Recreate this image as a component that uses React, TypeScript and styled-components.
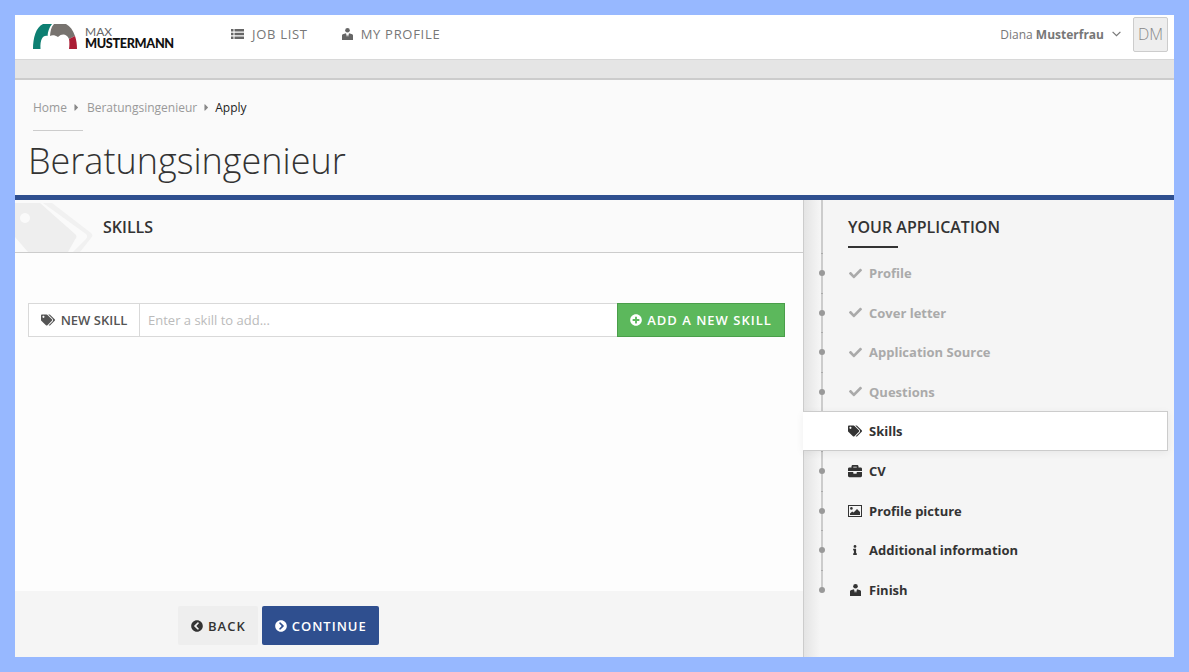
import styled, { createGlobalStyle } from 'styled-components';
import type { ReactNode } from 'react';
import {
  FaBriefcase,
  FaCaretRight,
  FaCheck,
  FaChevronCircleLeft,
  FaChevronCircleRight,
  FaInfo,
  FaPlusCircle,
  FaTags,
} from 'react-icons/fa';

const GlobalStyle = createGlobalStyle`
  * { box-sizing: border-box; }
  html, body { margin: 0; height: 100%; }
  body {
    background: #97b8ff;
    font-family: 'Open Sans', 'Liberation Sans', sans-serif;
    color: #333;
  }
`;

function PictureIcon() {
  return (
    <svg width="14" height="12" viewBox="0 0 14 12">
      <path fill="currentColor" fillRule="evenodd" d="M0 0h14v12H0zM1 1v10h12V1z" />
      <circle cx="3.4" cy="3.4" r="1.3" fill="currentColor" />
      <path fill="currentColor" d="M2 10V8.4l2.2-2 1.4 1.2L9 4l3 3v3z" />
    </svg>
  );
}

function ListIcon() {
  return (
    <svg width="13" height="10" viewBox="0 0 13 10">
      <path
        fill="currentColor"
        d="M0 0h2.5v2.4H0zM3.5 0H13v2.4H3.5zM0 3.8h2.5v2.4H0zM3.5 3.8H13v2.4H3.5zM0 7.6h2.5V10H0zM3.5 7.6H13V10H3.5z"
      />
    </svg>
  );
}

function PersonIcon() {
  return (
    <svg width="11" height="12" viewBox="0 0 11 12">
      <circle cx="5.5" cy="2.3" r="2.3" fill="currentColor" />
      <path
        fill="currentColor"
        d="M0 12V7.6c0-.9.6-1.4 1.5-1.6L4 5.3 5 9l.5-2.4L6 9l1-3.7L9.5 6c.9.2 1.5.7 1.5 1.6V12z"
      />
    </svg>
  );
}

function ChevronIcon() {
  return (
    <svg width="9" height="6" viewBox="0 0 9 6">
      <path fill="none" stroke="currentColor" strokeWidth="1.2" d="M.6.8l3.9 3.9L8.4.8" />
    </svg>
  );
}

function Logo() {
  return (
    <svg width="44" height="26" viewBox="0 0 44 26">
      <path fill="#0d7f72" d="M0 25C0 14 3 3 10 0h9c-3 4-4 7-4.5 12C10 11 7 15 7.500 25z" />
      <path fill="#77736f" d="M21 0h12c4 2 7 6 9 12l-6 3c-2-5-7-6-11-2-3-2-6-2-8-1 .5-5 1-9 4-12z" />
      <path fill="#ab1d35" d="M36 15l6-3c1.500 4 2 9 2 13h-8c.5-4 .5-7 0-10z" />
    </svg>
  );
}

const steps: { label: string; icon: ReactNode; done?: boolean; active?: boolean }[] = [
  { label: 'Profile', icon: <FaCheck />, done: true },
  { label: 'Cover letter', icon: <FaCheck />, done: true },
  { label: 'Application Source', icon: <FaCheck />, done: true },
  { label: 'Questions', icon: <FaCheck />, done: true },
  { label: 'Skills', icon: <FaTags size={14} />, active: true },
  { label: 'CV', icon: <FaBriefcase size={14} /> },
  { label: 'Profile picture', icon: <PictureIcon /> },
  { label: 'Additional information', icon: <FaInfo size={10} /> },
  { label: 'Finish', icon: <PersonIcon /> },
];

export default function App() {
  return (
    <Frame>
      <GlobalStyle />
      <Header>
        <Brand>
          <Logo />
          <BrandText>
            <span>MAX</span>
            <strong>MUSTERMANN</strong>
          </BrandText>
        </Brand>
        <Nav>
          <NavLink><ListIcon /> JOB LIST</NavLink>
          <NavLink><PersonIcon /> MY PROFILE</NavLink>
        </Nav>
        <UserBox>
          <UserName>Diana <b>Musterfrau</b></UserName>
          <ChevronIcon />
          <Avatar>DM</Avatar>
        </UserBox>
      </Header>
      <GreyBar />
      <TitleArea>
        <Breadcrumbs>
          <a>Home</a>
          <FaCaretRight />
          <a>Beratungsingenieur</a>
          <FaCaretRight />
          <em>Apply</em>
        </Breadcrumbs>
        <Rule />
        <PageTitle>Beratungsingenieur</PageTitle>
      </TitleArea>
      <Columns>
        <Main>
          <SectionHead>
            <Watermark viewBox="0 0 78 52">
              <path fill="#f1f1f1" d="M28 3h9l39 30c2 1.500 2 3 0 5L65 52h-7l13-13c1.500-2 1.500-3 0-5z" />
              <path fill="#eeeeee" fillRule="evenodd" d="M0 3h25l35 31c2 1.500 2 3.500 0 5.500L53 52H13L0 37zM10 13a5 5 0 1 0 .01 0z" />
            </Watermark>
            <h2>SKILLS</h2>
          </SectionHead>
          <MainBody>
            <InputGroup>
              <Addon><FaTags /> NEW SKILL</Addon>
              <SkillInput placeholder="Enter a skill to add..." />
              <AddButton><FaPlusCircle /> ADD A NEW SKILL</AddButton>
            </InputGroup>
          </MainBody>
          <Footer>
            <FooterButton><FaChevronCircleLeft /> BACK</FooterButton>
            <FooterButton $primary><FaChevronCircleRight /> CONTINUE</FooterButton>
          </Footer>
        </Main>
        <Sidebar>
          <SideTitle>YOUR APPLICATION</SideTitle>
          <StepList>
            {steps.map((s) => (
              <Step key={s.label} $done={s.done} $active={s.active}>
                <StepIcon>{s.icon}</StepIcon>
                {s.label}
              </Step>
            ))}
          </StepList>
        </Sidebar>
      </Columns>
    </Frame>
  );
}

const Frame = styled.div`
  height: 100vh;
  border: 15px solid #97b8ff;
  background: #fafafa;
  display: flex;
  flex-direction: column;
  overflow: hidden;
`;

const Header = styled.header`
  height: 45px;
  flex: none;
  background: #fff;
  border-bottom: 1px solid #d8d8d8;
  display: flex;
  align-items: center;
  padding: 0 6px 6px 18px;
`;

const Brand = styled.div`
  display: flex;
  align-items: center;
  gap: 8px;
  width: 198px;
  margin-top: 5px;
`;

const BrandText = styled.div`
  display: flex;
  flex-direction: column;
  padding-top: 2px;
  font-family: Lato, 'Liberation Sans', sans-serif;
  font-size: 12px;
  line-height: 12px;
  font-weight: 400;
  color: #666;
  strong {
    color: #111;
    font-size: 12.7px;
    line-height: 11px;
    font-weight: 900;
    letter-spacing: -0.35px;
  }
`;

const Nav = styled.nav`
  display: flex;
  gap: 34px;
`;

const NavLink = styled.a`
  font-size: 13px;
  font-weight: 500;
  letter-spacing: 0.7px;
  color: #777;
  display: flex;
  align-items: center;
  gap: 8px;
  svg { color: #666; }
`;

const UserBox = styled.div`
  margin-left: auto;
  display: flex;
  align-items: center;
  color: #777;
  font-size: 12px;
`;

const UserName = styled.span`
  margin-right: 8px;
  b { font-weight: 700; }
`;

const Avatar = styled.div`
  width: 35px;
  height: 35px;
  margin-left: 12px;
  background: #eee;
  border: 1px solid #ccc;
  border-radius: 2px;
  color: #888;
  font-size: 16px;
  font-weight: 300;
  display: flex;
  align-items: center;
  justify-content: center;
`;

const GreyBar = styled.div`
  height: 20px;
  flex: none;
  background: #e5e5e5;
  border-bottom: 2px solid #ccc;
`;

const TitleArea = styled.section`
  height: 115px;
  flex: none;
  padding: 19px 13px 0;
`;

const Breadcrumbs = styled.div`
  display: flex;
  align-items: center;
  font-size: 12px;
  line-height: 17px;
  color: #999;
  padding-left: 5px;
  svg { font-size: 11px; color: #888; margin: 0 5px 0 4px; }
  em { font-style: normal; color: #222; margin-left: -2px; }
`;

const Rule = styled.div`
  width: 50px;
  height: 1px;
  background: #ccc;
  margin: 14px 0 0 5px;
`;

const PageTitle = styled.h1`
  margin: 8px 0 0;
  font-size: 36px;
  line-height: 44px;
  font-weight: 300;
  color: #333;
`;

const Columns = styled.div`
  flex: 1;
  min-height: 0;
  display: flex;
  border-top: 5px solid #2f4f8f;
`;

const Main = styled.main`
  width: 788px;
  flex: none;
  display: flex;
  flex-direction: column;
  background: #fdfdfd;
`;

const SectionHead = styled.div`
  position: relative;
  height: 53px;
  flex: none;
  background: #fafafa;
  border-bottom: 1px solid #ccc;
  display: flex;
  align-items: center;
  padding: 2px 0 0 88px;
  h2 {
    position: relative;
    margin: 0;
    font-size: 16px;
    font-weight: 600;
    color: #333;
  }
`;

const Watermark = styled.svg`
  position: absolute;
  left: 0;
  top: 0;
  width: 78px;
  height: 52px;
`;

const MainBody = styled.div`
  flex: 1;
  padding: 50px 18px 0 13px;
`;

const InputGroup = styled.div`
  display: flex;
  height: 34px;
`;

const Addon = styled.div`
  width: 112px;
  flex: none;
  background: #fff;
  border: 1px solid #d9d9d9;
  display: flex;
  align-items: center;
  justify-content: center;
  gap: 6px;
  font-size: 13px;
  font-weight: 600;
  color: #555;
  svg { font-size: 14px; }
`;

const SkillInput = styled.input`
  flex: 1;
  min-width: 0;
  border: 1px solid #d9d9d9;
  border-left: 0;
  border-right: 0;
  padding: 0 8px;
  font: 13px 'Open Sans', sans-serif;
  outline: none;
  &::placeholder { color: #bbb; opacity: 1; }
`;

const AddButton = styled.button`
  width: 168px;
  flex: none;
  background: #5cb85c;
  border: 1px solid #4a9e4a;
  color: #fff;
  font: 600 13px 'Open Sans', sans-serif;
  letter-spacing: 1px;
  display: flex;
  align-items: center;
  justify-content: center;
  gap: 5px;
  svg { font-size: 12px; }
`;

const Footer = styled.div`
  height: 66px;
  flex: none;
  background: #f5f5f5;
  display: flex;
  align-items: flex-start;
  gap: 4px;
  padding: 15px 0 0 163px;
`;

const FooterButton = styled.button<{ $primary?: boolean }>`
  height: 39px;
  padding: 0 12px 0 13px;
  border: 0;
  border-radius: 2px;
  background: ${(p) => (p.$primary ? '#2f4f8f' : '#eee')};
  color: ${(p) => (p.$primary ? '#fff' : '#333')};
  font: 600 13px 'Open Sans', sans-serif;
  letter-spacing: 1px;
  display: flex;
  align-items: center;
  gap: 5px;
  svg { font-size: 12px; }
`;

const Sidebar = styled.aside`
  flex: 1;
  position: relative;
  background: linear-gradient(to right, #e4e4e4, #f5f5f5 16px);
  border-left: 1px solid #ccc;
  padding: 0 6px 0 0;
  &::before {
    content: '';
    position: absolute;
    left: 17px;
    top: 0;
    height: 390px;
    width: 2px;
    background: #ccc;
  }
`;

const SideTitle = styled.h3`
  position: relative;
  margin: 0 0 0 44px;
  padding-top: 16px;
  height: 53px;
  font-size: 16px;
  line-height: 22px;
  font-weight: 600;
  color: #333;
  &::after {
    content: '';
    position: absolute;
    left: 0;
    top: 46px;
    width: 50px;
    height: 2px;
    background: #333;
  }
`;

const StepList = styled.ul`
  list-style: none;
  margin: 0;
  padding: 0.3px 0 0;
`;

const Step = styled.li<{ $done?: boolean; $active?: boolean }>`
  position: relative;
  height: 39.6px;
  padding-left: 44px;
  display: flex;
  align-items: center;
  font-size: 13px;
  font-weight: 700;
  color: ${(p) => (p.$done ? '#aaa' : '#333')};
  ${(p) =>
    p.$active &&
    `
    height: 40.2px;
    margin: -0.6px 0 0 -1px;
    background: #fff;
    border: 1px solid #ccc;
    border-left: 0;
    box-shadow: 0 2px 8px rgba(0, 0, 0, 0.06);
    padding-left: 45px;
  `}
  &::before {
    content: ${(p) => (p.$active ? 'none' : "''")};
    position: absolute;
    left: 15px;
    top: 17px;
    width: 6px;
    height: 6px;
    border-radius: 50%;
    background: #999;
  }
  &::after {
    content: ${(p) => (p.$active ? 'none' : "''")};
    position: absolute;
    left: 17px;
    top: 0;
    width: 2px;
    height: 1px;
    background: #aaa;
  }
`;

const StepIcon = styled.span`
  width: 14px;
  margin-right: 7px;
  display: flex;
  justify-content: center;
  font-size: 13px;
`;
